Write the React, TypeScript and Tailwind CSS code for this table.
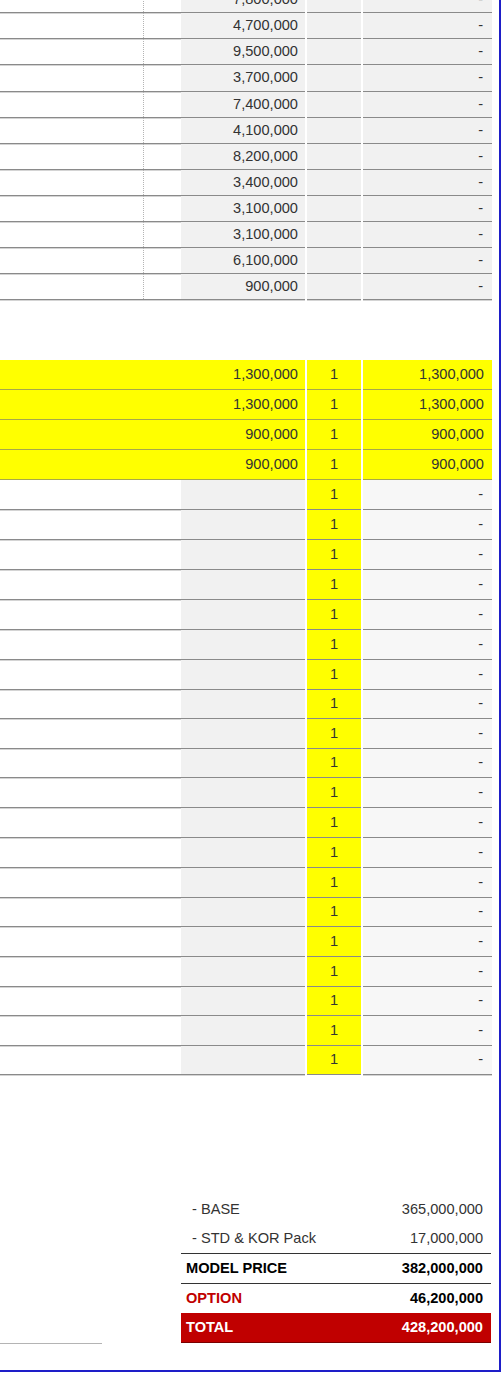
import React from "react";

const topPrices = [
  "7,800,000",
  "4,700,000",
  "9,500,000",
  "3,700,000",
  "7,400,000",
  "4,100,000",
  "8,200,000",
  "3,400,000",
  "3,100,000",
  "3,100,000",
  "6,100,000",
  "900,000",
];

const options = [
  { price: "1,300,000", total: "1,300,000" },
  { price: "1,300,000", total: "1,300,000" },
  { price: "900,000", total: "900,000" },
  { price: "900,000", total: "900,000" },
];

const shortRows = [7, 9, 14, 17, 19];
const emptyRows = Array.from({ length: 20 }, (_, i) => i);

const summary = [
  { label: "- BASE", value: "365,000,000" },
  { label: "- STD & KOR Pack", value: "17,000,000" },
];

function TopRow({ price, tall }: { price: string; tall: boolean }) {
  return (
    <div className={tall ? "flex h-[27px] shrink-0" : "flex h-[26px] shrink-0"}>
      <div className="flex w-[305px] border-b border-[#8a8a8a] shadow-[0_1px_0_#d4d4d4]">
        <div className="w-[143px]" />
        <div className="w-[38px] border-l border-dotted border-[#b4b4b4]" />
        <div className="flex flex-1 items-center justify-end bg-[#f1f1f1] pr-[7px]">{price}</div>
      </div>
      <div className="ml-[2px] w-[54px] border-b border-[#8a8a8a] bg-[#f1f1f1] shadow-[0_1px_0_#d4d4d4]" />
      <div className="ml-[2px] flex w-[129px] items-center justify-end border-b border-[#8a8a8a] bg-[#f1f1f1] pr-[9px] shadow-[0_1px_0_#d4d4d4]">
        -
      </div>
    </div>
  );
}

function OptionRow({ price, total }: { price: string; total: string }) {
  return (
    <div className="flex h-[30px] shrink-0">
      <div className="flex w-[305px] items-center justify-end border-b border-[#a7a74a] bg-[#ffff00] pr-[7px]">
        {price}
      </div>
      <div className="ml-[2px] flex w-[54px] items-center justify-center border-b border-[#a7a74a] bg-[#ffff00]">
        1
      </div>
      <div className="ml-[2px] flex w-[129px] items-center justify-end border-b border-[#a7a74a] bg-[#ffff00] pr-[8px]">
        {total}
      </div>
    </div>
  );
}

function QtyRow({ short }: { short: boolean }) {
  return (
    <div className={short ? "flex h-[29px] shrink-0" : "flex h-[30px] shrink-0"}>
      <div className="flex w-[305px] border-b border-[#8a8a8a] shadow-[0_1px_0_#d4d4d4]">
        <div className="w-[181px]" />
        <div className="flex-1 bg-[#f1f1f1]" />
      </div>
      <div className="ml-[2px] flex w-[54px] items-center justify-center border-b border-[#8a8a8a] bg-[#ffff00]">
        1
      </div>
      <div className="ml-[2px] flex w-[129px] items-center justify-end border-b border-[#8a8a8a] bg-[#f7f7f7] pr-[9px] shadow-[0_1px_0_#d4d4d4]">
        -
      </div>
    </div>
  );
}

export default function App() {
  return (
    <div className="h-[1373px] w-[504px] overflow-hidden bg-white">
      <div
        className="h-[1372px] w-[501px] overflow-hidden border-r-2 border-b-2 border-[#1e1ec8] text-[14.6px] text-[#333333]"
        style={{ fontFamily: '"Liberation Sans", Arial, sans-serif' }}
      >
        <div className="-mt-[13px] flex flex-col">
          {topPrices.map((p, i) => (
            <TopRow key={i} price={p} tall={i === 3} />
          ))}
        </div>

        <div className="mt-[60px] flex flex-col">
          {options.map((o, i) => (
            <OptionRow key={i} price={o.price} total={o.total} />
          ))}
          {emptyRows.map((i) => (
            <QtyRow key={i} short={shortRows.includes(i)} />
          ))}
        </div>

        <div className="mt-[120px] flex items-end">
          <div className="mb-[-1px] h-px w-[102px] bg-[#b4b4b4]" />
          <div className="ml-[79px] flex w-[310px] flex-col">
            {summary.map((s) => (
              <div key={s.label} className="flex h-[29px] items-center justify-between pl-[11px] pr-[8px]">
                <span>{s.label}</span>
                <span>{s.value}</span>
              </div>
            ))}
            <div className="flex h-[31px] items-center justify-between border-y border-[#333333] pl-[5px] pr-[8px] font-bold text-black">
              <span>MODEL PRICE</span>
              <span>382,000,000</span>
            </div>
            <div className="flex h-[29px] items-center justify-between pl-[5px] pr-[8px] font-bold text-black">
              <span className="text-[#c00000]">OPTION</span>
              <span>46,200,000</span>
            </div>
            <div className="flex h-[30px] items-center justify-between border-b border-[#7a0000] bg-[#c00000] pl-[5px] pr-[8px] font-bold text-white">
              <span>TOTAL</span>
              <span>428,200,000</span>
            </div>
          </div>
        </div>
      </div>
    </div>
  );
}
